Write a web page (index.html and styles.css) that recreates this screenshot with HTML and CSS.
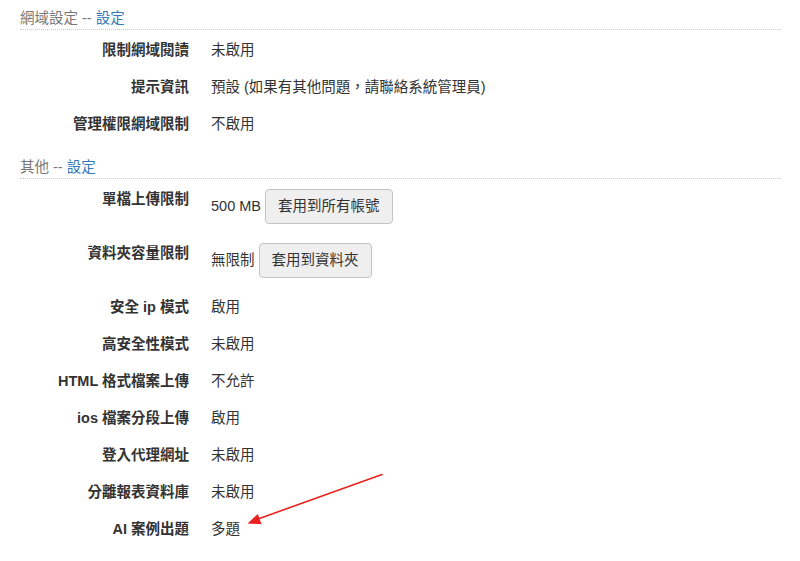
FILE: index.html
```html
<!DOCTYPE html>
<html lang="zh-Hant">
<head>
<meta charset="utf-8">
<title>設定</title>
<link rel="stylesheet" href="styles.css">
</head>
<body>
<div class="section-title">網域設定 -- <a class="link" href="#">設定</a></div>
<div class="row"><div class="label">限制網域閱讀</div><div class="value">未啟用</div></div>
<div class="row"><div class="label">提示資訊</div><div class="value">預設 (如果有其他問題<span class="punct">，</span>請聯絡系統管理員)</div></div>
<div class="row"><div class="label">管理權限網域限制</div><div class="value">不啟用</div></div>

<div class="section-title second">其他 -- <a class="link" href="#">設定</a></div>
<div class="row tall"><div class="label">單檔上傳限制</div><div class="value">500 MB <button class="btn">套用到所有帳號</button></div></div>
<div class="row tall"><div class="label">資料夾容量限制</div><div class="value">無限制 <button class="btn">套用到資料夾</button></div></div>
<div class="row"><div class="label">安全 ip 模式</div><div class="value">啟用</div></div>
<div class="row"><div class="label">高安全性模式</div><div class="value">未啟用</div></div>
<div class="row"><div class="label">HTML 格式檔案上傳</div><div class="value">不允許</div></div>
<div class="row"><div class="label">ios 檔案分段上傳</div><div class="value">啟用</div></div>
<div class="row"><div class="label">登入代理網址</div><div class="value">未啟用</div></div>
<div class="row"><div class="label">分離報表資料庫</div><div class="value">未啟用</div></div>
<div class="row"><div class="label">AI 案例出題</div><div class="value">多題</div></div>

<svg class="annotation" width="800" height="561" viewBox="0 0 800 561" aria-hidden="true">
  <line x1="382" y1="474.5" x2="258" y2="519" stroke="#e8221e" stroke-width="1.6" stroke-linecap="round"/>
  <polygon points="247.5,523.5 261.6,524.2 257.8,513.9" fill="#e8221e"/>
</svg>
</body>
</html>
```
FILE: styles.css
```css
html, body {
  margin: 0;
  padding: 0;
  background: #fff;
}
body {
  margin: 8px;
  font-family: "Liberation Sans", "Noto Sans CJK TC", sans-serif;
  font-size: 14.5px;
  line-height: 21px;
  color: #333;
}
.section-title {
  margin: 0 12px 10px;
  color: #777;
  border-bottom: 1px dotted #c8c8c8;
}
.section-title.second {
  margin-top: 22px;
}
.link {
  color: #337ab7;
  text-decoration: none;
}
.row {
  display: flex;
  margin: 0 12px 16px;
}
.row.tall {
  margin-bottom: 19px;
}
.label {
  width: 169px;
  flex-shrink: 0;
  text-align: right;
  font-weight: bold;
  color: #333;
}
.value {
  margin-left: 22px;
  color: #333;
  height: auto;
}
.punct {
  font-family: "Noto Sans CJK SC", sans-serif;
  line-height: 0;
}
.btn {
  display: inline-block;
  font-family: inherit;
  font-size: 14.5px;
  line-height: 21px;
  padding: 6px 12px;
  margin: 0;
  color: #333;
  background: #efefef;
  border: 1px solid #c4c4c4;
  border-radius: 4px;
  vertical-align: baseline;
}
.annotation {
  position: absolute;
  left: 0;
  top: 0;
  pointer-events: none;
}
```
